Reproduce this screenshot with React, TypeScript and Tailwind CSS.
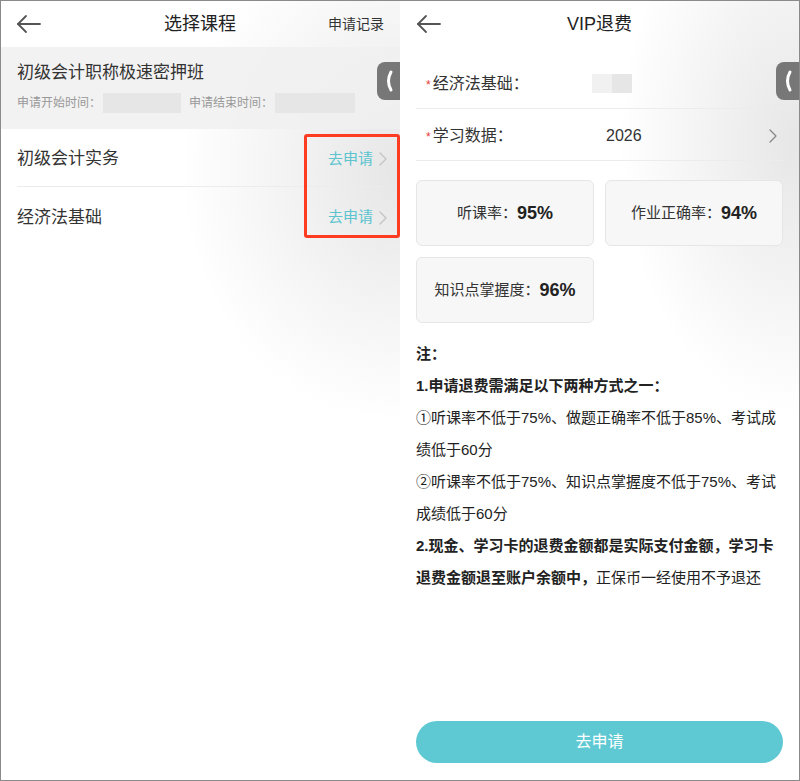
const font = { fontFamily: '"Liberation Sans", "Noto Sans CJK SC", sans-serif' };

function BackArrow() {
  return (
    <svg width="26" height="24" viewBox="0 0 26 24" fill="none" stroke="#555" strokeWidth="1.8" strokeLinecap="round" strokeLinejoin="round">
      <line x1="2" y1="12" x2="24" y2="12" />
      <polyline points="10,4 2,12 10,20" />
    </svg>
  );
}

function Chevron({ color = "#c4c4c4" }: { color?: string }) {
  return (
    <svg width="8" height="14" viewBox="0 0 8 14" fill="none" stroke={color} strokeWidth="1.3" strokeLinecap="round" strokeLinejoin="round">
      <polyline points="1,1 7,7 1,13" />
    </svg>
  );
}

function SideTab() {
  return (
    <div className="absolute right-0 top-[61px] flex h-[38px] w-[23px] items-center justify-center rounded-l-[8px] bg-[#777]">
      <svg width="10" height="24" viewBox="0 0 10 24" fill="none" stroke="#fff" strokeWidth="3" strokeLinecap="round">
        <path d="M7 3 Q2 12 7 21" />
      </svg>
    </div>
  );
}

function CourseList() {
  const courses = ["初级会计实务", "经济法基础"];
  return (
    <div className="relative flex w-[399px] flex-col bg-[radial-gradient(ellipse_55%_32%_at_100%_22%,#e6e6e6,#ffffff)]">
      <header className="grid h-[46px] grid-cols-[1fr_auto_1fr] items-center pl-[15px] pr-[16px]">
        <div className="justify-self-start">
          <BackArrow />
        </div>
        <h1 className="text-[18px] text-[#222]">选择课程</h1>
        <span className="justify-self-end text-[14px] text-[#333]">申请记录</span>
      </header>

      <section className="h-[82px] bg-[#f0f0f0]/85 px-[16px] pt-[14px]">
        <div className="text-[17px] leading-[24px] text-[#333]">初级会计职称极速密押班</div>
        <div className="mt-[8px] flex h-[20px] items-center text-[12px] text-[#999]">
          <span>申请开始时间：</span>
          <span className="ml-[2px] h-[20px] w-[78px] bg-[#e6e6e6]" />
          <span className="ml-[8px]">申请结束时间：</span>
          <span className="ml-[2px] h-[20px] w-[80px] bg-[#e6e6e6]" />
        </div>
      </section>

      <ul className="px-[16px]">
        {courses.map((name, i) => (
          <li
            key={name}
            className={`flex h-[58px] items-center justify-between pt-[3px] ${i === 0 ? "border-b border-[#ececec]" : ""}`}
          >
            <span className="text-[17px] text-[#333]">{name}</span>
            <span className="-mr-[3px] flex items-center gap-[6px] text-[15px] text-[#5bc4cf]">
              去申请
              <Chevron />
            </span>
          </li>
        ))}
      </ul>

      <div className="absolute left-[303px] top-[133px] h-[104px] w-[96px] rounded-[3px] border-[3px] border-[#ff3b22]" />
      <SideTab />
    </div>
  );
}

function Stat({ label, value }: { label: string; value: string }) {
  return (
    <div className="flex h-[66px] items-center justify-center rounded-[6px] border border-[#e6e6e6] bg-[#f7f7f7]">
      <span className="text-[15px] text-[#333]">{label}：</span>
      <span className="text-[18px] font-bold text-[#222]">{value}</span>
    </div>
  );
}

function Refund() {
  return (
    <div className="relative flex flex-1 flex-col bg-[radial-gradient(ellipse_45%_35%_at_100%_18%,#e6e6e6,#ffffff)] px-[16px]">
      <header className="grid h-[46px] grid-cols-[1fr_auto_1fr] items-center">
        <div className="justify-self-start">
          <BackArrow />
        </div>
        <h1 className="text-[18px] text-[#222]">VIP退费</h1>
        <span />
      </header>

      <div className="mt-[10px]">
        <div className="flex h-[52px] items-center border-b border-[#ececec] pl-[10px] pt-[2px]">
          <span className="w-[166px] text-[16px] text-[#333]">
            <span className="mr-[2px] text-[12px] text-[#e53935]">*</span>经济法基础：
          </span>
          <span className="flex h-[19px]">
            <span className="w-[20px] bg-[#f1f1f1]" />
            <span className="w-[20px] bg-[#e6e6e6]" />
          </span>
        </div>
        <div className="flex h-[52px] items-center border-b border-[#ececec] pl-[10px] pr-[6px] pt-[2px]">
          <span className="w-[180px] text-[16px] text-[#333]">
            <span className="mr-[2px] text-[12px] text-[#e53935]">*</span>学习数据：
          </span>
          <span className="text-[16px] text-[#333]">2026</span>
          <span className="ml-auto">
            <Chevron color="#888" />
          </span>
        </div>
      </div>

      <div className="mt-[19px] grid grid-cols-2 gap-[11px]">
        <Stat label="听课率" value="95%" />
        <Stat label="作业正确率" value="94%" />
        <Stat label="知识点掌握度" value="96%" />
      </div>

      <div className="mt-[15px] text-[15px] leading-[32px] text-[#222]">
        <p className="font-bold">注：</p>
        <p className="font-bold">1.申请退费需满足以下两种方式之一：</p>
        <p className="whitespace-nowrap">①听课率不低于75%、做题正确率不低于85%、考试成</p>
        <p>绩低于60分</p>
        <p className="whitespace-nowrap">②听课率不低于75%、知识点掌握度不低于75%、考试</p>
        <p>成绩低于60分</p>
        <p className="whitespace-nowrap font-bold">2.现金、学习卡的退费金额都是实际支付金额，学习卡</p>
        <p className="whitespace-nowrap">
          <span className="font-bold">退费金额退至账户余额中，</span>正保币一经使用不予退还
        </p>
      </div>

      <button className="mb-[17px] mt-auto h-[42px] w-full rounded-full bg-[#5ec9d3] text-[16px] text-white">
        去申请
      </button>
      <SideTab />
    </div>
  );
}

export default function App() {
  return (
    <div style={font} className="flex h-[781px] w-[800px] border border-[#8a8a8a] bg-white">
      <CourseList />
      <Refund />
    </div>
  );
}
